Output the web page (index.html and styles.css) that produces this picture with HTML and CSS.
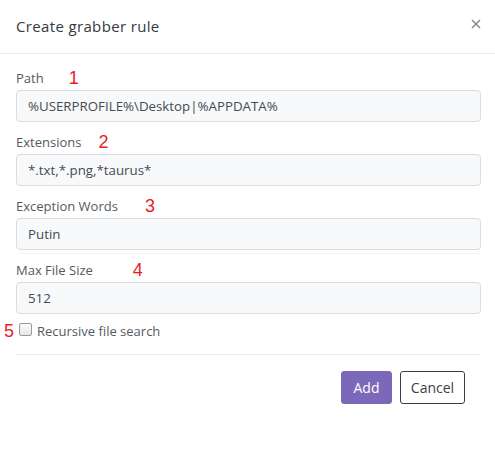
FILE: index.html
```html
<!DOCTYPE html>
<html>
<head>
<meta charset="utf-8">
<link rel="stylesheet" href="styles.css">
</head>
<body>
<div class="modal">
  <div class="modal-header">
    <h5 class="modal-title">Create grabber rule</h5>
    <button class="close" type="button" aria-label="Close">
      <svg width="10" height="10" viewBox="0 0 10 10"><path d="M1 1L9 9M9 1L1 9" stroke="#8a8a8a" stroke-width="1.5" fill="none"/></svg>
    </button>
  </div>
  <div class="modal-body">
    <div class="form-group">
      <div class="label-row"><label>Path</label><span class="note n1">1</span></div>
      <div class="input">%USERPROFILE%\Desktop|%APPDATA%</div>
    </div>
    <div class="form-group">
      <div class="label-row"><label>Extensions</label><span class="note n2">2</span></div>
      <div class="input">*.txt,*.png,*taurus*</div>
    </div>
    <div class="form-group">
      <div class="label-row"><label>Exception Words</label><span class="note n3">3</span></div>
      <div class="input">Putin</div>
    </div>
    <div class="faint"></div>
    <div class="form-group last">
      <div class="label-row"><label>Max File Size</label><span class="note n4">4</span></div>
      <div class="input">512</div>
    </div>
    <div class="check-row">
      <span class="note n5">5</span>
      <span class="checkbox"></span>
      <span class="check-label">Recursive file search</span>
    </div>
  </div>
  <div class="modal-footer">
    <button class="btn btn-primary" type="button">Add</button>
    <button class="btn btn-outline" type="button">Cancel</button>
  </div>
</div>
</body>
</html>
```
FILE: styles.css
```css
html, body {
  margin: 0;
  padding: 0;
  background: #fff;
}
body {
  font-family: "Open Sans", "Liberation Sans", sans-serif;
  color: #495057;
}
.modal {
  width: 495px;
  display: flex;
  flex-direction: column;
}
.modal-header {
  height: 54px;
  border-bottom: 1px solid #e9ecef;
  display: flex;
  align-items: center;
  justify-content: space-between;
  padding: 0 14px 0 16px;
  box-sizing: border-box;
}
.modal-title {
  margin: 0;
  font-size: 15px;
  font-weight: 400;
  color: #343a40;
  letter-spacing: 0.35px;
  padding-bottom: 2px;
}
.close {
  border: 0;
  background: none;
  padding: 0;
  width: 10px;
  height: 10px;
  display: flex;
  margin-bottom: 5px;
}
.modal-body {
  padding: 15px 14px 0 16px;
  display: flex;
  flex-direction: column;
}
.form-group {
  margin-bottom: 11px;
}
.form-group.last {
  margin-bottom: 7px;
}
.label-row {
  height: 18px;
  display: flex;
  align-items: center;
  margin-bottom: 3px;
}
label {
  font-size: 13px;
  color: #555a60;
}
.note {
  font-family: "Liberation Sans", Arial, sans-serif;
  font-size: 18px;
  color: #ed1c24;
  line-height: 18px;
}
.n1 { margin-left: 25px; }
.n2 { margin-left: 17px; }
.n3 { margin-left: 27px; }
.n4 { margin-left: 40px; }
.input {
  height: 32px;
  box-sizing: border-box;
  border: 1px solid #d9dce0;
  border-radius: 4px;
  background: #f8f9fa;
  padding: 0 11px;
  display: flex;
  align-items: center;
  font-size: 13.3px;
  color: #464b52;
}
.faint {
  height: 1px;
  background: #f4f5f6;
  margin: -8px 2px 7px;
}
.check-row {
  display: flex;
  align-items: center;
  height: 20px;
}
.n5 {
  margin-left: -12px;
  margin-right: 5px;
}
.checkbox {
  width: 11px;
  height: 11px;
  border: 1px solid #9a9a9a;
  border-radius: 2px;
  background: linear-gradient(#fdfdfd, #e6e6e6);
  margin-top: -3px;
}
.check-label {
  font-size: 13px;
  color: #555a60;
  margin-left: 5px;
}
.modal-footer {
  margin: 13px 14px 0 16px;
  border-top: 1px solid #e9ecef;
  padding: 16px 16px 0 0;
  display: flex;
  justify-content: flex-end;
  gap: 8px;
}
.btn {
  height: 33px;
  font-family: inherit;
  font-size: 14px;
  border-radius: 3px;
  padding: 0;
  box-sizing: border-box;
}
.btn-primary {
  width: 51px;
  background: #7b68b9;
  border: 1px solid #7b68b9;
  color: #fff;
}
.btn-outline {
  width: 65px;
  background: #fff;
  border: 1px solid #3d3d4a;
  color: #3d3d4a;
}
```
